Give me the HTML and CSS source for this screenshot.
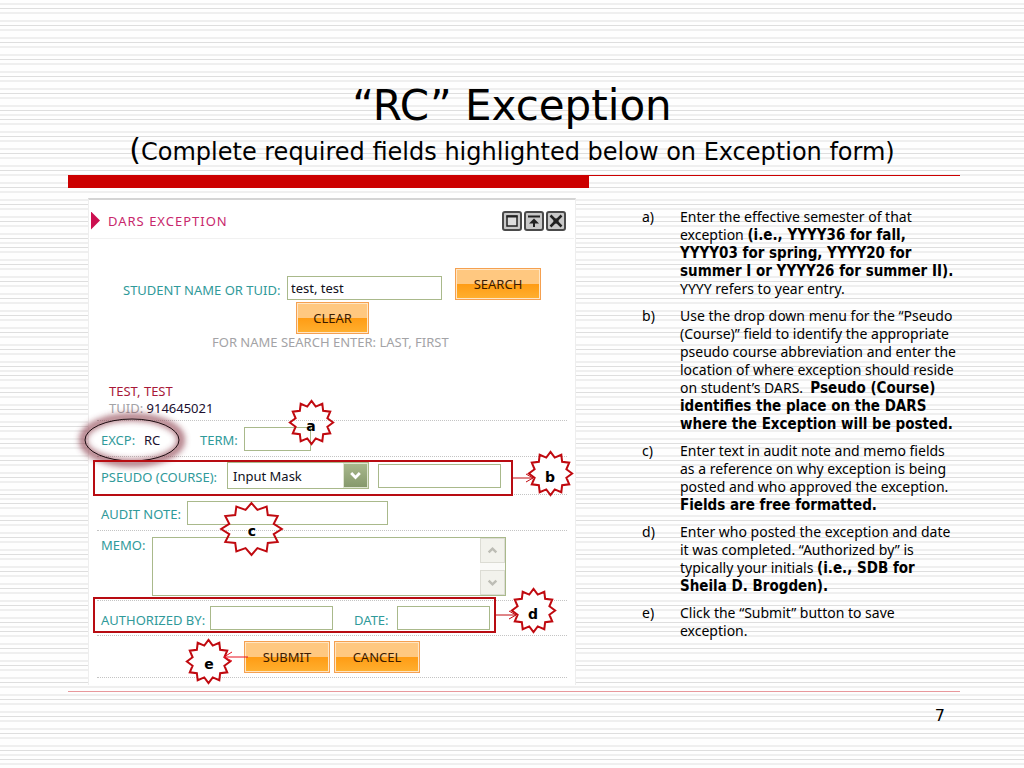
FILE: index.html
```html
<!DOCTYPE html>
<html lang="en">
<head>
<meta charset="utf-8">
<title>RC Exception</title>
<link rel="stylesheet" href="styles.css">
</head>
<body>
<main class="slide">
  <header class="heading">
    <h1 class="title">“RC” Exception</h1>
    <p class="subtitle"><span class="paren">(</span>Complete required fields highlighted below on Exception form)</p>
  </header>
  <div class="rule"></div>
  <div class="columns">
    <form class="panel">
      <div class="panel-head">
        <span class="marker"></span>
        <h2 class="panel-title">DARS EXCEPTION</h2>
        <div class="tools">
          <button type="button" class="tool" aria-label="Maximize"><svg viewBox="2 2 16 16"><rect x="5" y="5" width="10" height="10" fill="#ddd" stroke="#222" stroke-width="1.500"/><path d="M4.500 5.500h11" stroke="#222" stroke-width="2"/></svg></button>
          <button type="button" class="tool" aria-label="Collapse"><svg viewBox="2 2 16 16"><path d="M4 5.500h12M10 9v7" stroke="#222" stroke-width="2"/><path d="M5 12.500L10 7.500l5 5z" fill="#222"/></svg></button>
          <button type="button" class="tool" aria-label="Close"><svg viewBox="2 2 16 16"><path d="M4.500 4.500l11 11M15.500 4.500l-11 11" stroke="#222" stroke-width="2.500"/><path d="M7.500 7.500h5v5h-5z" fill="#222"/></svg></button>
        </div>
      </div>
      <div class="search-row">
        <label class="label" for="student">STUDENT NAME OR TUID:</label>
        <input class="box student" id="student" value="test, test">
        <button type="button" class="btn search">SEARCH</button>
      </div>
      <div class="clear-row"><button type="button" class="btn clear">CLEAR</button></div>
      <p class="hint">FOR NAME SEARCH ENTER: LAST, FIRST</p>
      <div class="person">
        <p class="name">TEST, TEST</p>
        <p class="tuid"><span class="muted">TUID:</span> 914645021</p>
      </div>
      <div class="row excp">
        <span class="label">EXCP:</span><span class="value">RC</span>
        <label class="label term-label" for="term">TERM:</label>
        <input class="box term" id="term">
      </div>
      <div class="row pseudo">
        <label class="label" for="pseudo">PSEUDO (COURSE):</label>
        <span class="select-wrap">
          <select class="box select" id="pseudo"><option>Input Mask</option></select>
          <svg class="drop" viewBox="0 0 24 24"><path d="M7.500 9.500l4.500 4.500 4.500-4.500" fill="none" stroke="#fff" stroke-width="3"/></svg>
        </span>
        <input class="box course" aria-label="Course">
      </div>
      <div class="row audit">
        <label class="label" for="audit">AUDIT NOTE:</label>
        <input class="box note" id="audit">
      </div>
      <div class="row memo">
        <label class="label" for="memo">MEMO:</label>
        <span class="memo-wrap">
          <textarea class="box memo-box" id="memo"></textarea>
          <span class="scroll">
            <svg class="arrow" viewBox="0 0 24 24"><path d="M8 14l4-4 4 4" fill="none" stroke="#bdbdb5" stroke-width="2.500"/></svg>
            <svg class="arrow" viewBox="0 0 24 24"><path d="M8 10l4 4 4-4" fill="none" stroke="#bdbdb5" stroke-width="2.500"/></svg>
          </span>
        </span>
      </div>
      <div class="row auth">
        <label class="label" for="auth">AUTHORIZED BY:</label>
        <input class="box by" id="auth">
        <label class="label date-label" for="date">DATE:</label>
        <input class="box date" id="date">
      </div>
      <div class="row actions">
        <button type="button" class="btn">SUBMIT</button>
        <button type="button" class="btn">CANCEL</button>
      </div>
      <svg class="marks" viewBox="0 0 488 487">
        <defs>
          <filter id="glow" x="-30%" y="-50%" width="160%" height="200%"><feGaussianBlur stdDeviation="3"/></filter>
          <symbol id="burst" viewBox="-52 -52 104 104" preserveAspectRatio="none" overflow="visible">
            <polygon vector-effect="non-scaling-stroke" points="0,-50 9.800,-36.700 25,-43.300 26.900,-26.900 43.300,-25 36.700,-9.800 50,0 36.700,9.800 43.300,25 26.900,26.900 25,43.300 9.800,36.700 0,50 -9.800,36.700 -25,43.300 -26.900,26.900 -43.300,25 -36.700,9.800 -50,0 -36.700,-9.800 -43.300,-25 -26.900,-26.900 -25,-43.300 -9.800,-36.700"/>
          </symbol>
        </defs>
        <ellipse class="halo" cx="44" cy="242" rx="49" ry="23" filter="url(#glow)"/>
        <ellipse class="ring" cx="44" cy="242" rx="47" ry="21"/>
        <rect class="frame" x="6" y="263" width="418" height="34"/>
        <rect class="frame" x="6" y="400" width="401" height="34"/>
        <use class="burst open" href="#burst" x="201" y="202" width="45" height="45"/>
        <use class="burst" href="#burst" x="440" y="253" width="45" height="45"/>
        <use class="burst open" href="#burst" x="132" y="304" width="63" height="54"/>
        <use class="burst" href="#burst" x="423" y="390" width="45" height="45"/>
        <use class="burst" href="#burst" x="98" y="441" width="45" height="45"/>
        <path class="lead" d="M425 280h20m-7-4l7 4-7 4"/>
        <path class="lead" d="M408 417h20m-7-4l7 4-7 4"/>
        <path class="lead bright" d="M160 459h-24m8-5l-8 5 8 4"/>
        <g class="letters">
          <text x="223" y="233">a</text>
          <text x="462" y="284">b</text>
          <text x="164" y="338">c</text>
          <text x="445" y="421">d</text>
          <text x="121" y="471">e</text>
        </g>
      </svg>
    </form>
    <ol class="steps">
      <li>Enter the effective semester of that<br>exception <b>(i.e., YYYY36 for fall,<br>YYYY03 for spring, YYYY20 for<br>summer I or YYYY26 for summer II).</b><br>YYYY refers to year entry.</li>
      <li>Use the drop down menu for the “Pseudo<br>(Course)” field to identify the appropriate<br>pseudo course abbreviation and enter the<br>location of where exception should reside<br>on student’s DARS.&nbsp; <b>Pseudo (Course)<br>identifies the place on the DARS<br>where the Exception will be posted.</b></li>
      <li>Enter text in audit note and memo fields<br>as a reference on why exception is being<br>posted and who approved the exception.<br><b>Fields are free formatted.</b></li>
      <li>Enter who posted the exception and date<br>it was completed. “Authorized by” is<br>typically your initials <b>(i.e., SDB for<br>Sheila D. Brogden).</b></li>
      <li>Click the “Submit” button to save<br>exception.</li>
    </ol>
  </div>
  <footer class="footer">7</footer>
</main>
</body>
</html>
```
FILE: styles.css
```css
* { box-sizing: border-box; }
body {
  margin: 0;
  color: #000;
  font-family: "Noto Sans", sans-serif;
  font-size: 14px;
  background-color: #fefefe;
  background-image: repeating-linear-gradient(#dedede 0 1px, transparent 1px 4px, #efefef 4px 6px, transparent 6px 12px, #efefef 12px 14px, transparent 14px 17px);
  background-size: 100% 128px;
  background-position: 0 -9px;
}
h1, h2, p, ol { margin: 0; padding: 0; font-weight: normal; }
.slide { min-height: 100vh; padding: 79px 64px 0 68px; }
.heading { text-align: center; padding-right: 4px; font-family: "DejaVu Sans", sans-serif; }
.title { font-size: 42px; line-height: 54px; }
.subtitle { font-size: 24px; line-height: 34px; white-space: nowrap; }
.paren { font-size: 30px; }
.rule { margin-top: 6px; height: 13px; border-top: 1px solid #c00; background: linear-gradient(#c00, #c00) 0 0 / 521px 100% no-repeat border-box; }
.columns { display: flex; align-items: flex-start; gap: 66px; padding: 10px 0 0 20px; }
.panel { position: relative; flex: 0 0 488px; background: #fff; border-top: 2px solid #d4d4d4; border-right: 1px solid #eee; border-left: 1px solid #eee; padding: 0 8px 7px 8px; }
.panel-head { display: flex; align-items: center; height: 39px; padding: 3px 8px 0 0; margin: 0 -7px; border-bottom: 1px solid #f1f1f1; }
.marker { width: 9px; height: 18px; margin-left: 1px; background: #cc1050; clip-path: polygon(0 0, 100% 50%, 0 100%); }
.panel-title { flex: 1; margin-left: 8px; font-size: 13px; letter-spacing: 1px; color: #c8286c; }
.tools { display: flex; gap: 2px; }
.tool { width: 20px; height: 20px; padding: 0; border: 2px solid #4a4a4a; border-radius: 3px; background: #c9c9c9; }
.tool svg { display: block; width: 16px; height: 16px; }
.label { color: #309a9a; font-size: 13px; line-height: 16px; white-space: nowrap; }
.box { display: block; height: 24px; border: 1px solid #a9b98b; background: #fff; color: #101020; font: 13px "Noto Sans", sans-serif; padding: 0 3px; border-radius: 0; }
.btn { display: block; width: 86px; height: 32px; padding: 0; border: 1px solid #f5a050; color: #3a1a00; font: 13px "Noto Sans", sans-serif; background: linear-gradient(#ffc880 0 50%, #ff9c14 50%, #ffb030); box-shadow: inset 0 0 0 1px #ffe6c4; }
.search-row { display: flex; align-items: flex-end; height: 61px; padding-left: 26px; }
.search-row .label { width: 164px; padding-bottom: 2px; }
.student { width: 155px; }
.search { margin-left: 13px; }
.clear { width: 73px; }
.clear-row { padding: 2px 0 0 199px; }
.hint { padding-left: 115px; color: #a3a3a6; font-size: 13px; line-height: 16px; }
.person { padding: 33px 0 3px 12px; font-size: 13px; line-height: 17px; }
.name { color: #a81838; }
.tuid { color: #201030; }
.muted { color: #a3a3a6; }
.row { display: flex; align-items: center; border-top: 1px dotted #c4c4c4; padding-left: 4px; }
.row .label, .value { padding-top: 3px; }
.excp { height: 36px; }
.value { width: 56px; margin-left: 5px; font-size: 13px; line-height: 16px; color: #201030; }
.excp .label { width: 38px; }
.excp .term-label { width: 44px; }
.term { width: 67px; }
.pseudo { height: 38px; }
.pseudo .label { width: 126px; }
.select-wrap, .memo-wrap { position: relative; }
.select { width: 142px; height: 27px; appearance: none; padding: 0 5px; }
.drop { position: absolute; top: 1px; right: 1px; width: 25px; height: 25px; background: linear-gradient(#a8b88c, #86996c); border: 1px solid #dfe6d2; }
.course { width: 123px; margin-left: 9px; }
.audit { height: 36px; }
.audit .label { width: 86px; }
.note { width: 201px; }
.memo { height: 70px; align-items: flex-start; padding-top: 6px; }
.row.memo .label { width: 51px; padding-top: 0; }
.memo-box { width: 354px; height: 59px; resize: none; }
.scroll { position: absolute; top: 1px; right: 1px; bottom: 1px; display: flex; flex-direction: column; justify-content: space-between; background: #fafaf8; }
.arrow { display: block; width: 25px; height: 25px; background: #f2f2ec; border: 1px solid #dcdcd4; }
.auth { height: 35px; }
.auth .label { width: 109px; }
.auth .date-label { width: 43px; margin-left: 21px; }
.by { width: 123px; }
.date { width: 93px; }
.actions { height: 43px; gap: 4px; padding-left: 147px; border-bottom: 1px dotted #c4c4c4; }
.marks { position: absolute; top: -2px; left: -1px; width: 488px; height: 487px; overflow: visible; pointer-events: none; }
.halo { fill: none; stroke: #8a3a4a; stroke-width: 7; opacity: .75; }
.ring { fill: none; stroke: #1c0c10; stroke-width: 1; }
.frame { fill: none; stroke: #b80c12; stroke-width: 2; }
.burst { fill: #fff; stroke: #c00a10; stroke-width: 2; }
.open { fill: none; }
.lead { fill: none; stroke: #c00a10; stroke-width: 1; }
.bright { stroke: #e81020; }
.letters { font: bold 14px "DejaVu Sans", sans-serif; text-anchor: middle; }
.steps { flex: 1; min-width: 0; padding: 10px 0 0 38px; list-style: none; counter-reset: step; line-height: 18px; white-space: nowrap; }
.steps b { font: bold 15px/16px "DejaVu Sans Condensed", "Noto Sans", sans-serif; }
.steps li { counter-increment: step; margin-bottom: 9px; }
.steps li::before { content: counter(step, lower-alpha) ")"; float: left; margin-left: -38px; }
.footer { margin-top: 6px; padding: 14px 15px 0 0; border-top: 1px solid #e8989c; text-align: right; font: 16px/20px "DejaVu Sans", sans-serif; }
```
